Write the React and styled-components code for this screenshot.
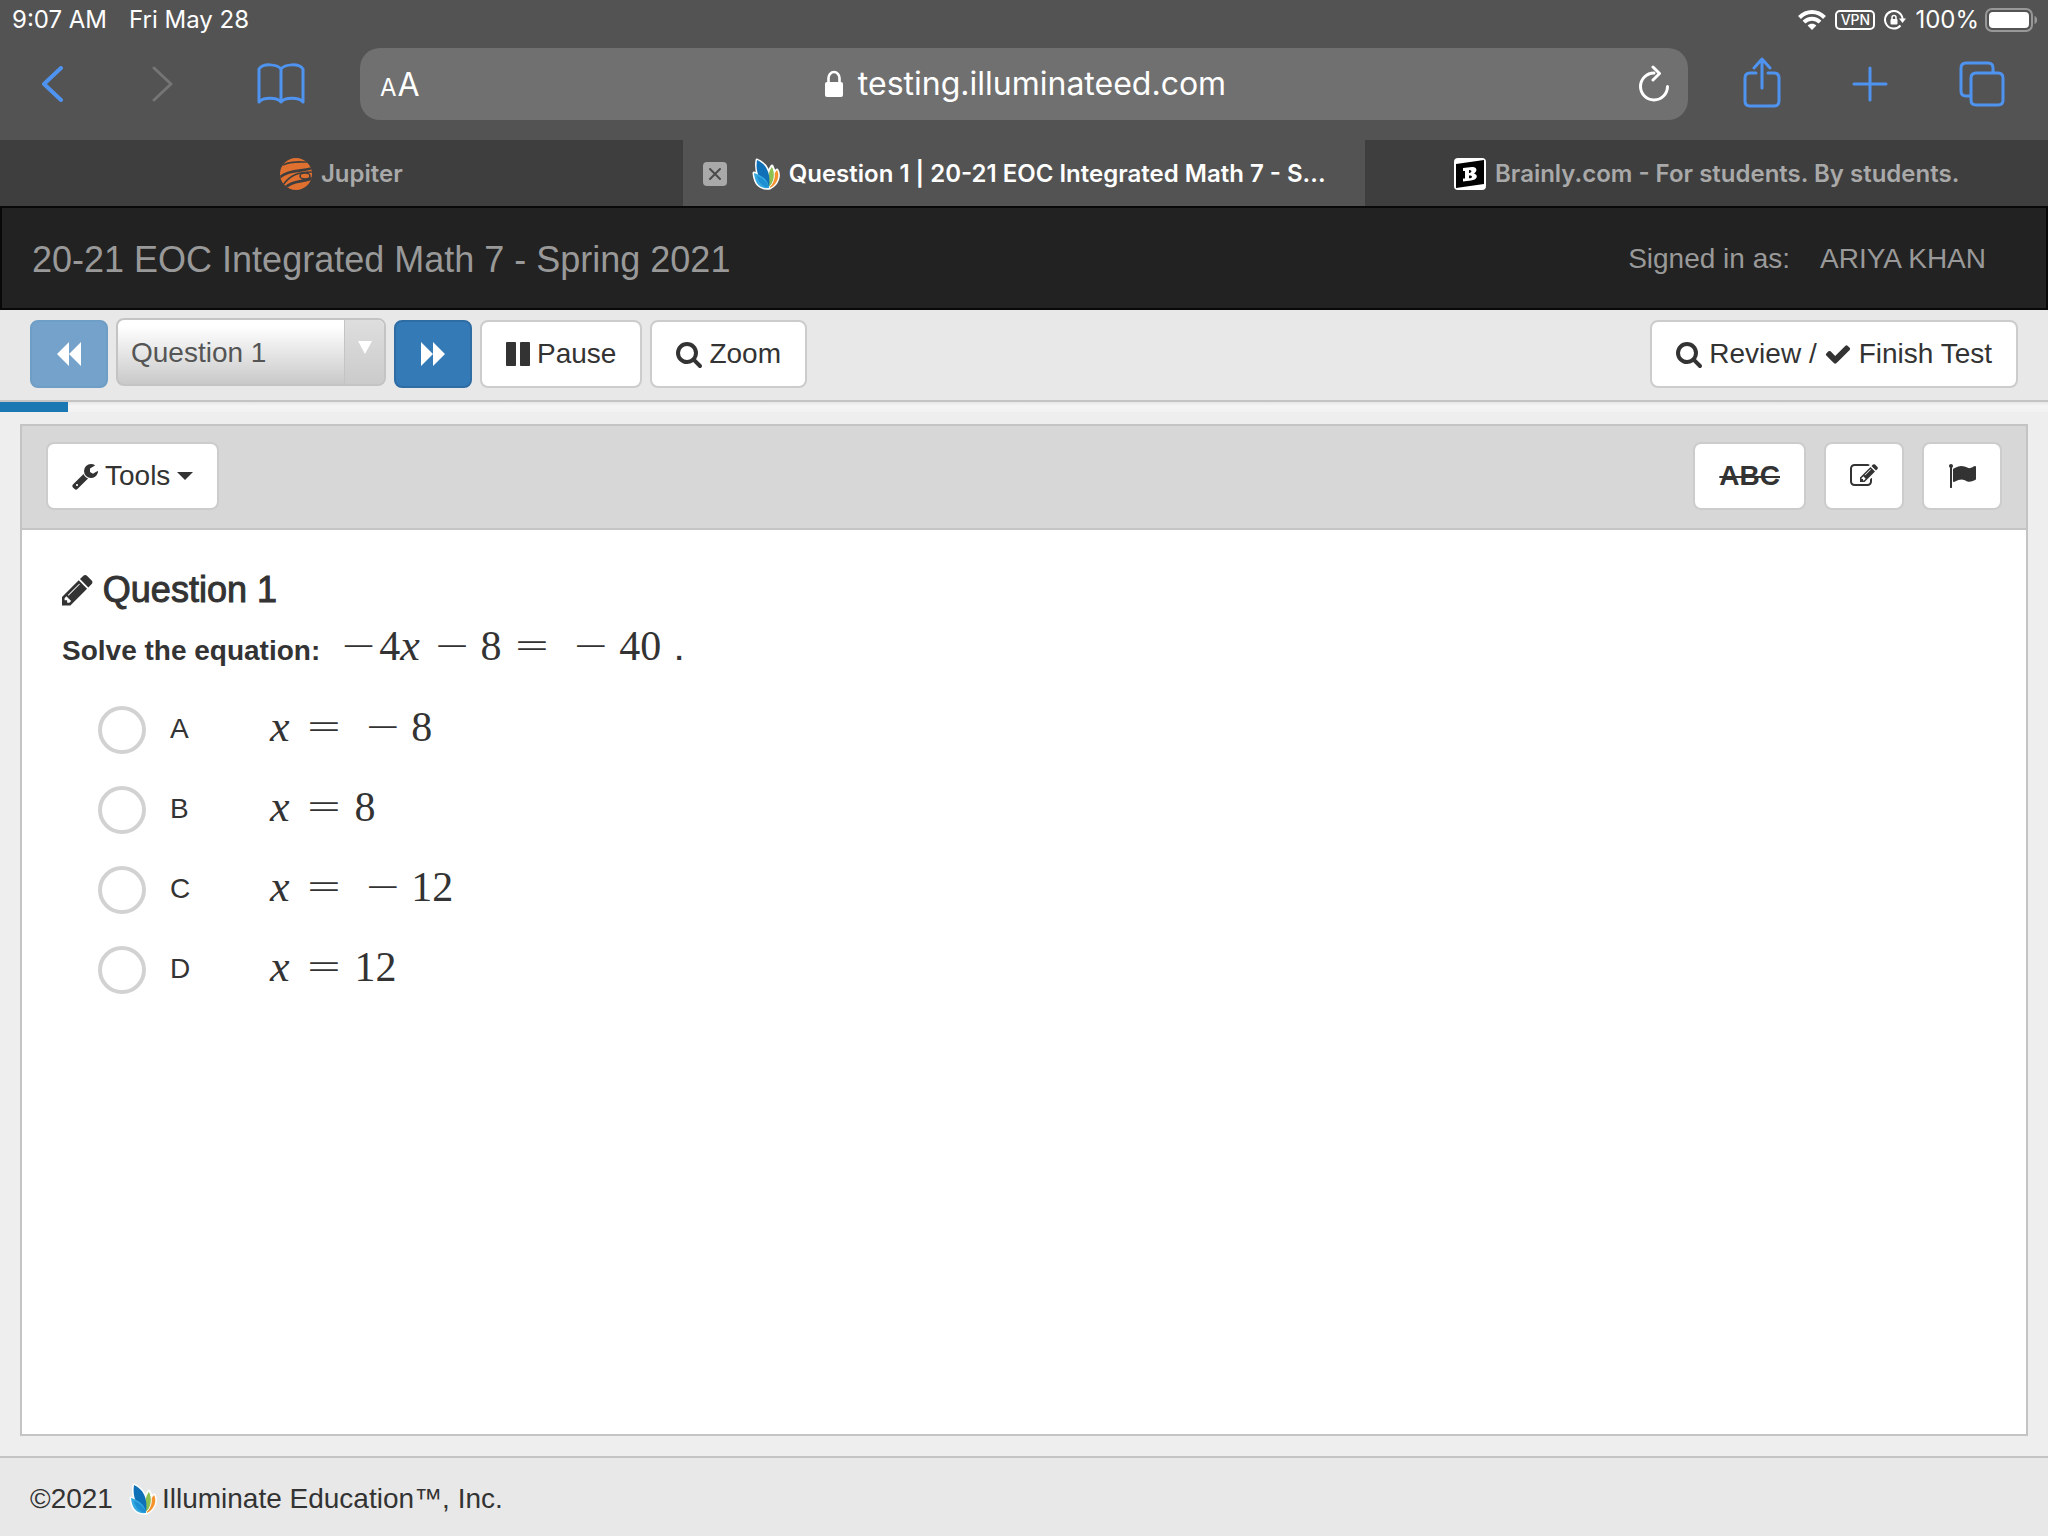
import React, { useState } from "react";
import styled, { createGlobalStyle } from "styled-components";

const sans = '"Liberation Sans", Arial, sans-serif';
const system = 'Inter, "Liberation Sans", sans-serif';
const mathSerif = '"Liberation Serif", "Times New Roman", serif';

const GlobalStyle = createGlobalStyle`
  *, *::before, *::after { box-sizing: border-box; }
  body {
    margin: 0;
    background: #eeeeee;
    color: #333333;
    font-family: ${sans};
    font-size: 28px;
    line-height: 40px;
  }
  button, select, input { font: inherit; color: inherit; margin: 0; }
  button { cursor: pointer; }
  svg { display: block; flex: none; }
`;

const Page = styled.div`
  display: flex;
  flex-direction: column;
  min-height: 100vh;
`;

/* ---------- Browser chrome ---------- */

const Chrome = styled.div`
  background: #535353;
  color: #ffffff;
  font-family: ${system};
`;

const StatusBar = styled.div`
  display: flex;
  justify-content: space-between;
  align-items: center;
  height: 40px;
  padding: 0 10px 0 12px;
  font-size: 24px;
`;

const StatusGroup = styled.div`
  display: flex;
  align-items: center;
  gap: ${(p) => p.$gap}px;
`;

const VpnBadge = styled.span`
  display: flex;
  align-items: center;
  justify-content: center;
  width: 40px;
  height: 20px;
  border: 2px solid #ffffff;
  border-radius: 5px;
  font-size: 14px;
  font-weight: 500;
  line-height: 16px;
`;

const BatteryGroup = styled.span`
  display: flex;
  align-items: center;
  gap: 6px;
`;

const Toolbar = styled.div`
  display: flex;
  align-items: center;
  height: 100px;
  padding: 0 8px 12px 0;
`;

const ToolButton = styled.button`
  display: flex;
  align-items: center;
  justify-content: center;
  width: ${(p) => p.$width}px;
  height: 72px;
  padding: 0;
  border: 0;
  background: none;
  color: ${(p) => (p.$dim ? "#757575" : "#4f93f0")};
`;

const AddressBar = styled.div`
  flex: 1;
  display: grid;
  grid-template-columns: 1fr auto 1fr;
  align-items: center;
  height: 72px;
  margin: 0 20px;
  padding: 0 18px 0 20px;
  border-radius: 20px;
  background: #707070;
`;

const TextSizeButton = styled.button`
  justify-self: start;
  display: flex;
  align-items: baseline;
  gap: 1px;
  padding: 4px 0 0;
  border: 0;
  background: none;
  font-size: 32px;

  small { font-size: 24px; }
`;

const Address = styled.div`
  display: flex;
  align-items: center;
  gap: 14px;
  font-size: 32px;
`;

const ReloadButton = styled.button`
  justify-self: end;
  padding: 0;
  border: 0;
  background: none;
`;

const TabStrip = styled.nav`
  display: grid;
  grid-template-columns: repeat(3, 1fr);
  height: 66px;
`;

const Tab = styled.div`
  display: flex;
  align-items: center;
  justify-content: ${(p) => (p.$active ? "flex-start" : "center")};
  gap: 9px;
  min-width: 0;
  padding: 2px 20px 0;
  background: ${(p) => (p.$active ? "#535353" : "#3e3e3e")};
  color: ${(p) => (p.$active ? "#ffffff" : "#a9a9a9")};
  font-size: 24px;
  font-weight: 600;
  white-space: nowrap;
`;

const TabLink = styled.a`
  display: flex;
  align-items: center;
  gap: 9px;
  color: inherit;
  text-decoration: none;
`;

const CloseTab = styled.button`
  display: flex;
  align-items: center;
  justify-content: center;
  width: 24px;
  height: 24px;
  margin-right: 16px;
  padding: 0;
  border: 0;
  border-radius: 4px;
  background: #a9a9a9;
  color: #4a4a4a;
`;

/* ---------- Test page ---------- */

const Header = styled.header`
  display: flex;
  align-items: center;
  justify-content: space-between;
  height: 104px;
  padding: 4px 60px 0 30px;
  border: 2px solid #080808;
  background: #222222;
  color: #999999;
`;

const TestTitle = styled.h1`
  margin: 0;
  font-size: 36px;
  font-weight: 400;
  line-height: 44px;
`;

const SignedIn = styled.div`
  display: flex;
  gap: 30px;
  padding-bottom: 2px;
`;

const NavBar = styled.div`
  display: flex;
  gap: 8px;
  height: 92px;
  padding: 10px 30px 0;
  border-bottom: 2px solid #c4c4c4;
  background: #e8e8e8;
`;

const Spacer = styled.div`
  flex: 1;
`;

const Button = styled.button`
  display: flex;
  align-items: center;
  justify-content: center;
  gap: 7px;
  height: 68px;
  padding: 12px 24px;
  border: 2px solid #cccccc;
  border-radius: 8px;
  background: #ffffff;
  white-space: nowrap;
`;

const StepButton = styled(Button)`
  width: 78px;
  border-color: #2e6da4;
  background: #337ab7;
  color: #ffffff;

  &:disabled {
    border-color: #6e9dc5;
    background: #75a2cb;
    cursor: default;
  }
`;

const StruckText = styled.s`
  font-weight: 700;
  text-decoration-thickness: 2px;
`;

const SelectBox = styled.div`
  position: relative;
  width: 270px;
  height: 68px;
  margin-top: -2px;
`;

const QuestionSelect = styled.select`
  appearance: none;
  width: 100%;
  height: 100%;
  padding: 2px 48px 0 13px;
  border: 2px solid #c4c4c4;
  border-radius: 8px;
  background: linear-gradient(#ffffff 10%, #c9c9c9);
  color: #555555;
`;

const SelectArrow = styled.span`
  position: absolute;
  top: 2px;
  right: 2px;
  bottom: 2px;
  display: flex;
  justify-content: center;
  width: 40px;
  padding-top: 21px;
  border-left: 1px solid #c4c4c4;
  border-radius: 0 6px 6px 0;
  background: linear-gradient(#dedede, #cbcbcb);
  pointer-events: none;
`;

const ProgressTrack = styled.div`
  height: 10px;
  background: linear-gradient(#e6e6e6, #f5f5f5 40%, #f2f2f2);
`;

const ProgressFill = styled.div`
  height: 100%;
  background: #1c78b2;
`;

const Panel = styled.main`
  flex: 1;
  display: flex;
  flex-direction: column;
  margin: 12px 20px 20px;
  border: 2px solid #c4c4c4;
  background: #ffffff;
`;

const PanelTools = styled.div`
  display: flex;
  align-items: center;
  gap: 18px;
  height: 104px;
  padding: 0 24px 2px;
  border-bottom: 2px solid #c4c4c4;
  background: #d7d7d7;
`;

const Content = styled.section`
  padding: 38px 40px;
`;

const QuestionTitle = styled.h2`
  display: flex;
  align-items: center;
  gap: 10px;
  margin: 0;
  font-size: 36px;
  font-weight: 400;
  line-height: 44px;
  -webkit-text-stroke: 1px currentColor;

  svg { -webkit-text-stroke: 0; }
`;

const Prompt = styled.p`
  display: flex;
  align-items: baseline;
  height: 78px;
  margin: 0;
  padding-top: 11px;
  font-weight: 700;
`;

const PromptMath = styled.span`
  margin: 0 14px 0 20px;
`;

const Choices = styled.fieldset`
  margin: 0;
  padding: 0 0 0 36px;
  border: 0;
`;

const Choice = styled.label`
  display: grid;
  grid-template-columns: 72px 100px 1fr;
  align-items: center;
  height: 80px;
  cursor: pointer;
`;

const ChoiceLetter = styled.span`
  padding-bottom: 2px;
`;

const ChoiceBody = styled.span`
  display: flex;
  padding-bottom: 8px;
`;

const Radio = styled.input`
  appearance: none;
  width: 48px;
  height: 48px;
  border: 4px solid #d2d2d2;
  border-radius: 50%;
  background: #ffffff;

  &:checked { background: radial-gradient(#337ab7 45%, #ffffff 50%); }
`;

const MathRow = styled.span`
  display: inline-flex;
  align-items: baseline;
  font-family: ${mathSerif};
  font-size: 42px;
  font-weight: 400;
  line-height: 44px;
`;

const Variable = styled.i`
  margin-right: 4px;
  font-size: 44px;
  line-height: 44px;
`;

const Operator = styled.span`
  margin: ${(p) => p.$margin};
  font-family: "DejaVu Sans Light", "DejaVu Sans", sans-serif;
  font-size: 44px;
  font-weight: 200;
  line-height: 44px;
`;

const Footer = styled.footer`
  display: flex;
  align-items: center;
  height: 80px;
  padding: 4px 30px 0;
  border-top: 2px solid #c4c4c4;
  background: #e8e8e8;
`;

const FooterBrand = styled.span`
  display: flex;
  align-items: center;
  gap: 5px;
  margin-left: 16px;
`;

/* ---------- Icons ---------- */

const glyphs = {
  search: [64, 1664, "M1216 832q0-185-131.5-316.5t-316.5-131.5-316.5 131.5-131.5 316.5 131.5 316.5 316.5 131.5 316.5-131.5 131.5-316.5zm512 832q0 52-38 90t-90 38q-54 0-90-38l-343-342q-179 124-399 124-143 0-273.5-55.5t-225-150-150-225-55.5-273.5 55.5-273.5 150-225 225-150 273.5-55.5 273.5 55.5 225 150 150 225 55.5 273.5q0 220-124 399l343 343q37 37 37 90z"],
  pause: [128, 1536, "M1664 192v1408q0 26-19 45t-45 19h-512q-26 0-45-19t-19-45v-1408q0-26 19-45t45-19h512q26 0 45 19t19 45zm-896 0v1408q0 26-19 45t-45 19h-512q-26 0-45-19t-19-45v-1408q0-26 19-45t45-19h512q26 0 45 19t19 45z"],
  check: [0, 1792, "M1671 566q0 40-28 68l-724 724-136 136q-28 28-68 28t-68-28l-136-136-362-362q-28-28-28-68t28-68l136-136q28-28 68-28t68 28l294 295 656-657q28-28 68-28t68 28l136 136q28 28 28 68z"],
  pencil: [128, 1536, "M491 1536l91-91-235-235-91 91v107h128v128h107zm523-928q0-22-22-22-10 0-17 7l-542 542q-7 7-7 17 0 22 22 22 10 0 17-7l542-542q7-7 7-17zm-54-192l416 416-832 832h-416v-416zm683 96q0 53-37 90l-166 166-416-416 166-165q36-38 90-38 53 0 91 38l235 234q37 39 37 91z"],
  edit: [0, 1792, "M888 1184l116-116-152-152-116 116v56h96v96h56zm440-720q-16-16-33 1l-350 350q-17 17-1 33t33-1l350-350q17-17 1-33zm80 594v190q0 119-84.5 203.5t-203.5 84.5h-832q-119 0-203.5-84.5t-84.5-203.5v-832q0-119 84.5-203.5t203.5-84.5h832q63 0 117 25 15 7 18 23 3 17-9 29l-49 49q-14 14-32 8-23-6-45-6h-832q-66 0-113 47t-47 113v832q0 66 47 113t113 47h832q66 0 113-47t47-113v-126q0-13 9-22l64-64q15-15 35-7t20 29zm-96-738l288 288-672 672h-288v-288zm444 132l-92 92-288-288 92-92q28-28 68-28t68 28l152 152q28 28 28 68t-28 68z"],
  flag: [0, 1792, "M320 256q0 72-64 110v1266q0 13-9.5 22.5t-22.5 9.5h-64q-13 0-22.5-9.5t-9.5-22.5v-1266q-64-38-64-110 0-53 37.5-90.5t90.5-37.5 90.5 37.5 37.5 90.5zm1472 64v763q0 25-12.5 38.5t-39.5 27.5q-215 116-369 116-61 0-123.5-22t-108.5-48-115.5-48-142.5-22q-192 0-464 146-17 9-33 9-26 0-45-19t-19-45v-742q0-32 31-55 21-14 79-43 236-120 421-120 107 0 200 29t219 88q38 19 88 19 54 0 117.5-21t110-47 88-47 54.5-21q26 0 45 19t19 45z"],
  wrench: [64, 1664, "M448 1472q0-26-19-45t-45-19-45 19-19 45 19 45 45 19 45-19 19-45zm644-420l-682 682q-37 37-90 37-52 0-91-37l-106-108q-38-36-38-90 0-53 38-91l681-681q39 98 114.5 173.5t173.5 114.5zm634-435q0 39-23 106-47 134-164.5 217.5t-258.5 83.5q-185 0-316.5-131.5t-131.5-316.5 131.5-316.5 316.5-131.5q58 0 121.5 16.5t107.5 46.5q16 11 16 28t-16 28l-293 169v224l193 107q5-3 79-48.5t135.5-81 70.5-35.5q15 0 23.5 10t8.5 25z"],
};

function Glyph({ name, size = 28 }) {
  const [x, w, d] = glyphs[name];
  return (
    <svg width={(size * w) / 1792} height={size} viewBox={`${x} 0 ${w} 1792`} fill="currentColor" aria-hidden="true">
      <path d={d} />
    </svg>
  );
}

function Line({ w, h, d, stroke = 4 }) {
  return (
    <svg width={w} height={h} viewBox={`0 0 ${w} ${h}`} fill="none" stroke="currentColor" strokeWidth={stroke} strokeLinecap="round" strokeLinejoin="round" aria-hidden="true">
      <path d={d} />
    </svg>
  );
}

function LeafLogo({ w, h }) {
  return (
    <svg width={w} height={h} viewBox="0 0 28 32" aria-hidden="true">
      <g stroke="#ffffff" strokeWidth="3" strokeLinejoin="round">
        <path d="M25 12C28 17 26 26 18 30C17 23 21 17 25 12Z" fill="#f5922e" />
        <path d="M20 8C24 15 23 25 16 30C14 22 16 13 20 8Z" fill="#8cc152" />
        <path d="M5 2C14 6 19 15 17 29C8 25 3 14 5 2Z" fill="#0f70b7" />
        <path d="M2 15C9 17 16 21 17 30C8 31 3 26 2 15Z" fill="#35a8e0" />
      </g>
      <path d="M25 12C28 17 26 26 18 30C17 23 21 17 25 12Z" fill="#f5922e" />
      <path d="M20 8C24 15 23 25 16 30C14 22 16 13 20 8Z" fill="#8cc152" stroke="#ffffff" strokeWidth="1" />
      <path d="M5 2C14 6 19 15 17 29C8 25 3 14 5 2Z" fill="#0f70b7" />
      <path d="M2 15C9 17 16 21 17 30C8 31 3 26 2 15Z" fill="#35a8e0" />
      <path d="M5 18C10 20 15 23 17 30C11 29 7 26 5 18Z" fill="#1d8fd2" />
    </svg>
  );
}

function JupiterLogo() {
  return (
    <svg width="32" height="32" viewBox="0 0 32 32" aria-hidden="true">
      <defs>
        <clipPath id="planet">
          <circle cx="16" cy="16" r="16" />
        </clipPath>
      </defs>
      <g clipPath="url(#planet)">
        <rect width="32" height="32" fill="#e0702f" />
        <g fill="none" stroke="#3e3e3e">
          <path d="M3 7C10 3 18 4 28 4" strokeWidth="1.600" />
          <path d="M-1 20C8 12 18 14 33 10" strokeWidth="2.600" />
          <path d="M3 27C10 17 18 14 33 14" strokeWidth="1.600" />
          <path d="M6 29C14 22 20 25 33 20" strokeWidth="3" />
          <ellipse cx="25" cy="18" rx="5" ry="3" strokeWidth="1.600" fill="#e0702f" />
        </g>
      </g>
    </svg>
  );
}

function BrainlyLogo() {
  return (
    <svg width="32" height="32" viewBox="0 0 32 32" aria-hidden="true">
      <rect width="32" height="32" rx="4" fill="#ffffff" />
      <path d="M2 6L30 2V26L2 30Z" fill="#000000" />
      <path fillRule="evenodd" fill="#ffffff" d="M9 10L18 9C23 8.500 24 13 20 15.500C25 17 23 22 17 22.500L9 23.500V20.500H11V13H9ZM15 12V15C18 15 18.500 11.700 15 12ZM15 17.500V20.300C19 20.300 19 17 15 17.500Z" />
    </svg>
  );
}

function WifiIcon() {
  return (
    <svg width="28" height="20" viewBox="0 0 28 20" fill="none" stroke="#ffffff" strokeWidth="4" aria-hidden="true">
      <path d="M1.500 7.500C8.500 0.300 19.500 0.300 26.500 7.500" />
      <path d="M6 12.200C10.500 7.700 17.500 7.700 22 12.200" />
      <path d="M9.600 15.500C12 13 16 13 18.400 15.500L14 20Z" fill="#ffffff" stroke="none" />
    </svg>
  );
}

function RotationLockIcon() {
  return (
    <svg width="22" height="20" viewBox="0 0 22 20" fill="none" stroke="#ffffff" strokeWidth="2" aria-hidden="true">
      <path d="M16.500 15.500A8.800 8.800 0 1 1 18.600 9" />
      <path d="M15 8.500H22L18.500 13Z" fill="#ffffff" stroke="none" />
      <rect x="6.500" y="9" width="7" height="5.500" rx="1" fill="#ffffff" stroke="none" />
      <path d="M8 9.500V7.500A2 2 0 0 1 12 7.500V9.500" strokeWidth="1.500" />
    </svg>
  );
}

function BatteryIcon() {
  return (
    <svg width="53" height="24" viewBox="0 0 53 24" aria-hidden="true">
      <rect x="1" y="1" width="46" height="22" rx="6" fill="none" stroke="#989898" strokeWidth="2" />
      <rect x="4" y="4" width="40" height="16" rx="4" fill="#ffffff" />
      <path d="M49.500 8C53 9 53 15 49.500 16Z" fill="#989898" />
    </svg>
  );
}

function Triangle({ w, h, color }) {
  return (
    <svg width={w} height={h} viewBox="0 0 10 10" preserveAspectRatio="none" fill={color} aria-hidden="true">
      <path d="M0 0H10L5 10Z" />
    </svg>
  );
}

/* ---------- Math ---------- */

const gaps = { "=": "0 12px 0 12px", "−": "0 10px 0 10px" };

function Formula({ tokens }) {
  return (
    <MathRow>
      {tokens.map((t, i) => {
        if (t === "x") return <Variable key={i}>x</Variable>;
        if (gaps[t]) return <Operator key={i} $margin={i === 0 ? "0 2px 0 0" : gaps[t]}>{t}</Operator>;
        return <span key={i}>{t}</span>;
      })}
    </MathRow>
  );
}

const choices = [
  { letter: "A", tokens: ["x", "=", "−", "8"] },
  { letter: "B", tokens: ["x", "=", "8"] },
  { letter: "C", tokens: ["x", "=", "−", "12"] },
  { letter: "D", tokens: ["x", "=", "12"] },
];

export default function App() {
  const [answer, setAnswer] = useState(null);
  const progress = 3.33;

  return (
    <Page>
      <GlobalStyle />
      <Chrome>
        <StatusBar>
          <StatusGroup $gap={22}>
            <span>9:07 AM</span>
            <span>Fri May 28</span>
          </StatusGroup>
          <StatusGroup $gap={9}>
            <WifiIcon />
            <VpnBadge>VPN</VpnBadge>
            <RotationLockIcon />
            <BatteryGroup>
              <span>100%</span>
              <BatteryIcon />
            </BatteryGroup>
          </StatusGroup>
        </StatusBar>

        <Toolbar>
          <ToolButton $width={104} aria-label="Back">
            <Line w={22} h={36} d="M20 2L3 18L20 34" />
          </ToolButton>
          <ToolButton $width={118} $dim aria-label="Forward">
            <Line w={22} h={36} d="M2 2L19 18L2 34" stroke={3} />
          </ToolButton>
          <ToolButton $width={118} aria-label="Bookmarks">
            <Line w={48} h={42} stroke={3} d="M24 6C20 1 6 0 2 6V39C6 34 20 34 24 39C28 34 42 34 46 39V6C42 0 28 1 24 6ZM24 6V39" />
          </ToolButton>
          <AddressBar>
            <TextSizeButton aria-label="Page settings">
              <small>A</small>A
            </TextSizeButton>
            <Address>
              <svg width="20" height="28" viewBox="0 0 20 28" aria-hidden="true">
                <rect x="1" y="12" width="18" height="15" rx="2" fill="#ffffff" />
                <path d="M4.500 13V8A5.500 6 0 0 1 15.500 8V13" fill="none" stroke="#ffffff" strokeWidth="2.600" />
              </svg>
              <span>testing.illuminateed.com</span>
            </Address>
            <ReloadButton aria-label="Reload">
              <Line w={32} h={38} stroke={3} d="M16 8A13.500 13.500 0 1 0 29.500 21.500M15 2L21.500 8.500L15 15" />
            </ReloadButton>
          </AddressBar>
          <ToolButton $width={108} aria-label="Share">
            <Line w={38} h={56} stroke={3} d="M13 17H7Q2 17 2 22V45Q2 50 7 50H31Q36 50 36 45V22Q36 17 31 17H25M19 32V4M11 12L19 3L27 12" />
          </ToolButton>
          <ToolButton $width={108} aria-label="New tab">
            <Line w={36} h={36} stroke={3} d="M18 2V34M2 18H34" />
          </ToolButton>
          <ToolButton $width={116} aria-label="Show tabs">
            <Line w={46} h={46} stroke={3} d="M11 35H7Q2 35 2 30V7Q2 2 7 2H29Q34 2 34 7V12M17 12H39Q44 12 44 17V39Q44 44 39 44H17Q12 44 12 39V17Q12 12 17 12Z" />
          </ToolButton>
        </Toolbar>

        <TabStrip>
          <Tab>
            <TabLink href="#jupiter">
              <JupiterLogo />
              Jupiter
            </TabLink>
          </Tab>
          <Tab $active>
            <CloseTab aria-label="Close tab">
              <Line w={14} h={14} stroke={2} d="M2 2L12 12M12 2L2 12" />
            </CloseTab>
            <TabLink href="#question-1">
              <LeafLogo w={28} h={32} />
              Question 1 | 20-21 EOC Integrated Math 7 - S...
            </TabLink>
          </Tab>
          <Tab>
            <TabLink href="#brainly">
              <BrainlyLogo />
              Brainly.com - For students. By students.
            </TabLink>
          </Tab>
        </TabStrip>
      </Chrome>

      <Header>
        <TestTitle>20-21 EOC Integrated Math 7 - Spring 2021</TestTitle>
        <SignedIn>
          <span>Signed in as:</span>
          <span>ARIYA KHAN</span>
        </SignedIn>
      </Header>

      <NavBar>
        <StepButton disabled aria-label="Previous question">
          <svg width="24" height="24" viewBox="0 0 24 24" fill="currentColor" aria-hidden="true">
            <path d="M12 0V24L0 12ZM24 0V24L12 12Z" />
          </svg>
        </StepButton>
        <SelectBox>
          <QuestionSelect aria-label="Question" defaultValue="1">
            <option value="1">Question 1</option>
          </QuestionSelect>
          <SelectArrow>
            <Triangle w={14} h={13} color="#ffffff" />
          </SelectArrow>
        </SelectBox>
        <StepButton aria-label="Next question">
          <svg width="24" height="24" viewBox="0 0 24 24" fill="currentColor" aria-hidden="true">
            <path d="M0 0V24L12 12ZM12 0V24L24 12Z" />
          </svg>
        </StepButton>
        <Button>
          <Glyph name="pause" />
          Pause
        </Button>
        <Button>
          <Glyph name="search" />
          Zoom
        </Button>
        <Spacer />
        <Button>
          <Glyph name="search" />
          Review /
          <Glyph name="check" />
          Finish Test
        </Button>
      </NavBar>

      <ProgressTrack>
        <ProgressFill style={{ width: `${progress}%` }} />
      </ProgressTrack>

      <Panel>
        <PanelTools>
          <Button>
            <Glyph name="wrench" />
            Tools
            <Triangle w={16} h={8} color="#333333" />
          </Button>
          <Spacer />
          <Button aria-label="Strikethrough">
            <StruckText>ABC</StruckText>
          </Button>
          <Button aria-label="Notes">
            <Glyph name="edit" />
          </Button>
          <Button aria-label="Flag question">
            <Glyph name="flag" />
          </Button>
        </PanelTools>

        <Content>
          <QuestionTitle>
            <Glyph name="pencil" size={36} />
            Question 1
          </QuestionTitle>
          <Prompt>
            Solve the equation:
            <PromptMath>
              <Formula tokens={["−", "4", "x", "−", "8", "=", "−", "40"]} />
            </PromptMath>
            .
          </Prompt>
          <Choices aria-label="Answer choices">
            {choices.map(({ letter, tokens }) => (
              <Choice key={letter}>
                <Radio type="radio" name="answer" checked={answer === letter} onChange={() => setAnswer(letter)} />
                <ChoiceLetter>{letter}</ChoiceLetter>
                <ChoiceBody>
                  <Formula tokens={tokens} />
                </ChoiceBody>
              </Choice>
            ))}
          </Choices>
        </Content>
      </Panel>

      <Footer>
        <span>©2021</span>
        <FooterBrand>
          <LeafLogo w={28} h={32} />
          Illuminate Education™, Inc.
        </FooterBrand>
      </Footer>
    </Page>
  );
}
